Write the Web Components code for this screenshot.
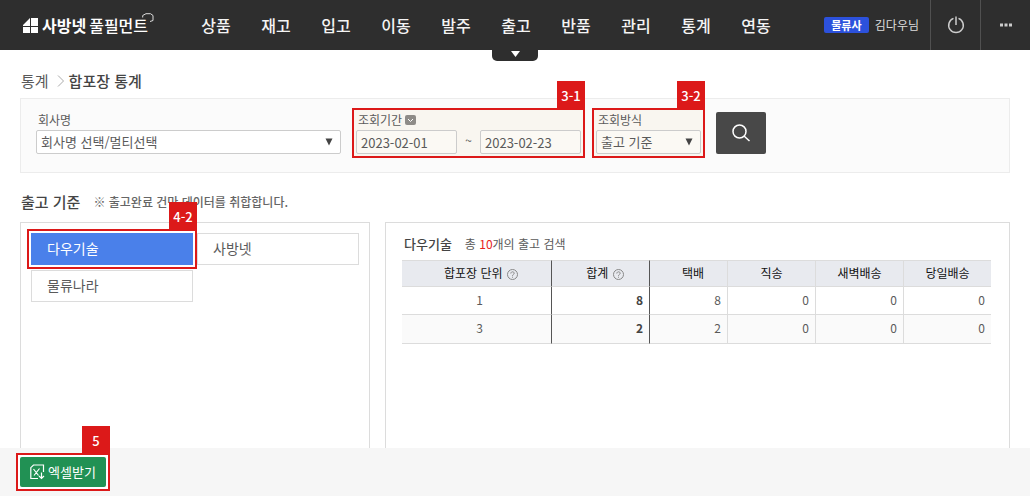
<!DOCTYPE html>
<html lang="ko">
<head>
<meta charset="utf-8">
<meta name="viewport" content="width=device-width, initial-scale=1">
<title>합포장 통계</title>
<style>
  body {
    margin: 0;
    background: #fff;
    color: #5a5a5a;
    font: 12px/18px "Noto Sans CJK KR", "Noto Sans", sans-serif;
    --red: #dc1919;
    --line: #dcdcdc;
  }
</style>
</head>
<body>
<stats-page></stats-page>

<script>
  const base = `
    *, *::before, *::after { box-sizing: border-box; }
    button, input, select { font: inherit; color: inherit; margin: 0; }
    a { color: inherit; text-decoration: none; }
    svg { display: block; }
  `;

  function define(name, html, setup) {
    const template = document.createElement('template');
    template.innerHTML = html.replace('<style>', '<style>' + base);
    customElements.define(name, class extends HTMLElement {
      constructor() {
        super();
        this.attachShadow({ mode: 'open' });
      }
      connectedCallback() {
        if (this.shadowRoot.firstChild) return;
        this.shadowRoot.append(template.content.cloneNode(true));
        if (setup) setup(this.shadowRoot, this);
      }
    });
  }

  /* Red numbered frame around whatever is slotted in. */
  define('call-out', `
    <style>
      :host { display: block; position: relative; }
      .frame { position: absolute; inset: -4px; border: 2px solid var(--red); pointer-events: none; background: var(--tint, transparent); }
      .tag {
        position: absolute; right: -4px; bottom: calc(100% + 3px);
        width: 28px; height: 28px; background: var(--red); color: #fff;
        font-size: 13px; line-height: 30px; font-weight: 500; text-align: center;
      }
      .content { position: relative; }
    </style>
    <span class="frame"></span>
    <div class="content"><slot></slot></div>
    <span class="tag"></span>
  `, (root, host) => { root.querySelector('.tag').textContent = host.getAttribute('label'); });

  define('brand-logo', `
    <style>
      :host { display: block; flex: none; }
      a { position: relative; display: flex; align-items: center; color: #fff; font-size: 16px; line-height: 24px; font-weight: 700; white-space: nowrap; }
      .mark { margin-right: 3px; }
      .light { font-weight: 500; margin-left: 3px; }
      .hex { position: absolute; right: -6px; top: 0; }
    </style>
    <a href="#">
      <svg class="mark" width="16" height="16" viewBox="0 0 16 16" fill="#fff"><path d="M7 1v8H0V8zM8 1h7v8H8zM0 10h7v6H0zM8 10h7v6H8z"/></svg>
      <span>사방넷</span><span class="light">풀필먼트</span>
      <svg class="hex" width="12" height="10" viewBox="0 0 12 10" fill="none" stroke="#ddd"><path d="M.7 4.500V2.500L4 .7h4.500L11 2.500v5L8 8.500"/></svg>
    </a>
  `);

  define('app-header', `
    <style>
      :host { display: block; background: #2e2e2e; color: #fff; }
      header { display: flex; align-items: center; height: 50px; padding-left: 23px; }
      nav { display: flex; margin-left: 38px; height: 50px; }
      nav a { position: relative; width: 60px; font-size: 16px; line-height: 51px; font-weight: 500; text-align: center; color: #f4f4f4; }
      .tab { position: absolute; top: 50px; left: 6px; width: 46px; height: 11px; border-radius: 0 0 5px 5px; background: #2e2e2e; display: flex; justify-content: center; }
      .user { display: flex; align-items: center; margin-left: auto; gap: 6px; padding-right: 11px; color: #ddd; white-space: nowrap; }
      .badge { background: #2c51dc; color: #fff; border-radius: 2px; width: 45px; font-size: 11px; line-height: 16px; font-weight: 700; text-align: center; }
      button { width: 50px; height: 50px; flex: none; border: 0; border-left: 1px solid #505050; background: none; padding: 0; display: grid; place-items: center; }
    </style>
    <header>
      <brand-logo></brand-logo>
      <nav></nav>
      <div class="user"><span class="badge">물류사</span><span>김다우님</span></div>
      <button aria-label="로그아웃"><svg width="18" height="18" viewBox="0 0 18 18" fill="none" stroke="#ccc" stroke-width="1.500"><path d="M6.500 2.400a7.300 7.300 0 1 0 5 0M9 .5V9"/></svg></button>
      <button aria-label="더보기"><svg width="14" height="4" viewBox="0 0 14 4" fill="#ccc"><path d="M1 .5h3v3H1zM5.500 .5h3v3h-3zM10 .5h3v3h-3z"/></svg></button>
    </header>
  `, root => {
    root.querySelector('nav').innerHTML = ['상품', '재고', '입고', '이동', '발주', '출고', '반품', '관리', '통계', '연동']
      .map(t => `<a href="#">${t}${t === '출고' ? '<span class="tab"><svg width="9" height="7" viewBox="0 0 9 7"><path d="M0 1h9L4.500 7z" fill="#fff"/></svg></span>' : ''}</a>`).join('');
  });

  define('crumb-trail', `
    <style>
      :host { display: block; }
      nav { display: flex; align-items: center; padding: 20px 1px 6px; font-size: 15px; line-height: 22px; }
      svg { margin: 0 4px 0 8px; }
      b { font-weight: 500; color: #444; }
    </style>
    <nav>
      <a href="#">통계</a>
      <svg width="8" height="12" viewBox="0 0 8 12" fill="none" stroke="#aaa"><path d="M1 .5 6.500 6 1 11.500"/></svg>
      <b aria-current="page">합포장 통계</b>
    </nav>
  `);

  define('select-field', `
    <style>
      :host { display: block; }
      label { display: block; padding-left: 2px; line-height: 16px; margin-bottom: 2px; }
      .box { position: relative; }
      select { appearance: none; display: block; width: 100%; height: 24px; border: 1px solid #ccc; border-radius: 2px; background: var(--field-bg, #fff); padding: 0 20px 0 4px; font-size: 13px; line-height: 20px; }
      svg { position: absolute; right: 8px; top: 8px; pointer-events: none; }
    </style>
    <label for="s"></label>
    <div class="box">
      <select id="s"><option></option></select>
      <svg width="8" height="8" viewBox="0 0 8 8"><path d="M.5.5h7L4 7.500z" fill="#444"/></svg>
    </div>
  `, (root, host) => {
    root.querySelector('label').textContent = host.getAttribute('label');
    root.querySelector('option').textContent = host.getAttribute('value');
  });

  define('date-range', `
    <style>
      :host { display: block; }
      .head { display: flex; align-items: center; gap: 3px; padding-left: 2px; line-height: 16px; margin-bottom: 2px; }
      .row { display: flex; }
      input { width: 101px; height: 24px; border: 1px solid #ccc; border-radius: 2px; background: var(--field-bg, #fff); padding: 0 4px; font-size: 13px; line-height: 20px; }
      .to { width: 23px; text-align: center; line-height: 20px; }
    </style>
    <div class="head">
      <label for="from">조회기간</label>
      <svg width="11" height="10" viewBox="0 0 11 10"><rect width="11" height="10" rx="2" fill="#8f8c88"/><path d="M3 4l2.500 2.500L8 4" fill="none" stroke="#fff"/></svg>
    </div>
    <div class="row">
      <input id="from" type="text" value="2023-02-01">
      <span class="to">~</span>
      <input type="text" value="2023-02-23" aria-label="조회기간 종료일">
    </div>
  `);

  define('search-panel', `
    <style>
      :host { display: block; }
      form { display: flex; gap: 15px; padding: 13px 15px 18px; border: 1px solid #ececec; background: #fbfbfb; }
      .company { flex: 0 1 305px; }
      call-out { --tint: #f9f6f0; --field-bg: #fbf9f4; flex: none; }
      .method { width: 105px; }
      button { width: 50px; height: 42px; flex: none; border: 0; border-radius: 2px; background: #484848; padding: 0; display: grid; place-items: center; }
    </style>
    <form>
      <select-field class="company" label="회사명" value="회사명 선택/멀티선택"></select-field>
      <call-out label="3-1"><date-range></date-range></call-out>
      <call-out label="3-2"><select-field class="method" label="조회방식" value="출고 기준"></select-field></call-out>
      <button type="button" aria-label="검색"><svg width="18" height="18" viewBox="0 0 18 18" fill="none" stroke="#fff" stroke-width="1.500"><circle cx="7.500" cy="7.500" r="6.500"/><path d="M12 12l5.500 5"/></svg></button>
    </form>
  `);

  define('section-title', `
    <style>
      :host { display: flex; align-items: center; gap: 13px; padding: 18px 1px 9px; }
      h2 { margin: 0; font-size: 15px; line-height: 22px; font-weight: 500; color: #444; }
      p { margin: 0; font-weight: 500; line-height: 22px; color: #666; }
    </style>
    <h2>출고 기준</h2>
    <p>※ 출고완료 건만 데이터를 취합합니다.</p>
  `);

  define('company-list', `
    <style>
      :host { display: block; border: 1px solid var(--line); border-bottom: 0; padding: 10px; }
      .grid { display: grid; grid-template-columns: 1fr 1fr; gap: 5px 4px; }
      button { display: block; width: 100%; height: 32px; border: 1px solid var(--line); background: #fff; padding: 0 15px 2px; font-size: 14px; line-height: 28px; text-align: left; }
      .on { background: #4a80ea; border-color: #4a80ea; color: #fff; }
      call-out { z-index: 1; }
    </style>
    <div class="grid">
      <call-out label="4-2"><button class="on">다우기술</button></call-out>
      <button>사방넷</button>
      <button>물류나라</button>
    </div>
  `);

  define('help-mark', `
    <style>
      :host { display: inline-block; vertical-align: -2px; margin-left: 1px; }
    </style>
    <svg width="11" height="11" viewBox="0 0 11 11" fill="none" stroke="#888"><circle cx="5.500" cy="5.500" r="5"/><path d="M3.800 4.500C3.800 2.300 7.200 2.300 7.200 4.300 7.200 5.500 5.500 5.400 5.500 6.800M5.500 7.700v1"/></svg>
  `);

  define('stats-table', `
    <style>
      :host { display: block; border: 1px solid var(--line); border-bottom: 0; padding: 12px 18px 0 16px; }
      .head { display: flex; gap: 13px; padding: 0 2px 7px; line-height: 18px; }
      h3 { margin: 0; font-size: 13px; line-height: 18px; font-weight: 500; color: #444; }
      em { font-style: normal; color: #e8231b; }
      table { width: 100%; table-layout: fixed; border-collapse: separate; border-spacing: 0; }
      th, td { border-right: 1px solid var(--line); border-bottom: 1px solid var(--line); }
      th { height: 27px; padding: 0 0 2px; border-top: 1px solid var(--line); background: #e8eaef; color: #111; font-weight: 400; white-space: nowrap; }
      th:nth-child(-n+3) { padding-left: 9px; }
      td { height: 28px; padding: 0 6px 2px; text-align: right; }
      tr :last-child { border-right: 0; }
      tr :nth-child(-n+2) { border-right-color: #555; }
      td:first-child { text-align: center; padding-left: 12px; }
      td:nth-child(2) { font-weight: 700; color: #444; }
      tbody tr:last-child td { height: 29px; background: #fafafa; }
      .w1 { width: 150px; } .w2 { width: 98px; } .w3 { width: 78px; } .w4 { width: 88px; }
    </style>
    <div class="head"><h3>다우기술</h3><span>총 <em>10</em>개의 출고 검색</span></div>
    <table>
      <colgroup><col class="w1"><col class="w2"><col class="w3"><col class="w4"><col class="w4"><col></colgroup>
      <thead><tr><th>합포장 단위 <help-mark></help-mark></th><th>합계 <help-mark></help-mark></th><th>택배</th><th>직송</th><th>새벽배송</th><th>당일배송</th></tr></thead>
      <tbody>
        <tr><td>1</td><td>8</td><td>8</td><td>0</td><td>0</td><td>0</td></tr>
        <tr><td>3</td><td>2</td><td>2</td><td>0</td><td>0</td><td>0</td></tr>
      </tbody>
    </table>
  `);

  define('action-bar', `
    <style>
      :host { display: flex; padding: 9px 20px; background: #f6f6f6; }
      call-out { --tint: #fff; }
      button { display: flex; align-items: center; gap: 3px; height: 30px; width: 86px; padding: 0 0 0 10px; border: 0; border-radius: 2px; background: #219154; color: #fff; font-size: 13px; line-height: 30px; white-space: nowrap; }
      svg { flex: none; }
    </style>
    <call-out label="5">
      <button><svg width="15" height="16" viewBox="0 0 15 16" fill="none" stroke="#fff" stroke-width="1.200"><path d="M13.500 8V1H3.500L.8 3.700V14.500H8M3.500 5l5 6.500M9.500 4.500L4 11.500M11.500 8.500v6M9 12l2.500 2.500L14 12"/></svg><span>엑셀받기</span></button>
    </call-out>
  `);

  define('stats-page', `
    <style>
      :host { display: flex; flex-direction: column; min-height: 100vh; }
      main { flex: 1; display: flex; flex-direction: column; padding: 0 20px; }
      .panels { flex: 1; display: grid; grid-template-columns: minmax(0, 350fr) minmax(0, 625fr); gap: 15px; }
    </style>
    <app-header></app-header>
    <main>
      <crumb-trail></crumb-trail>
      <search-panel></search-panel>
      <section-title></section-title>
      <div class="panels">
        <company-list></company-list>
        <stats-table></stats-table>
      </div>
    </main>
    <action-bar></action-bar>
  `);
</script>
</body>
</html>
